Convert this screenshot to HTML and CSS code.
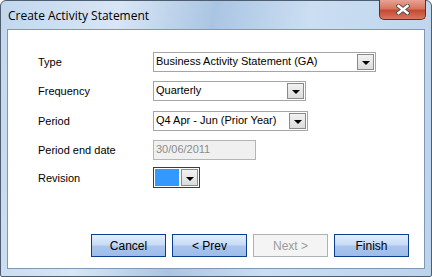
FILE: index.html
```html
<!DOCTYPE html>
<html lang="en">
<head>
  <meta charset="UTF-8">
  <title>Create Activity Statement</title>
  <link rel="stylesheet" href="styles.css">
</head>
<body>
  <div class="window">
    <div class="titlebar">
      <span class="title">Create Activity Statement</span>
      <div class="close">
        <svg width="14" height="11" viewBox="0 0 14 11">
          <path d="M2.5 2 L11.5 9 M11.5 2 L2.5 9" stroke="#505050" stroke-width="4.2" stroke-linecap="square"/>
          <path d="M2.5 2 L11.5 9 M11.5 2 L2.5 9" stroke="#fff" stroke-width="2.4" stroke-linecap="square"/>
        </svg>
      </div>
    </div>
    <div class="client">
      <div class="form">
        <div class="row r-type">
          <label>Type</label>
          <div class="combo w-type">
            <span class="value">Business Activity Statement (GA)</span>
            <span class="drop"><i></i></span>
          </div>
        </div>
        <div class="row r-freq">
          <label>Frequency</label>
          <div class="combo w-freq">
            <span class="value">Quarterly</span>
            <span class="drop"><i></i></span>
          </div>
        </div>
        <div class="row r-period">
          <label>Period</label>
          <div class="combo w-period">
            <span class="value">Q4 Apr - Jun (Prior Year)</span>
            <span class="drop"><i></i></span>
          </div>
        </div>
        <div class="row r-end">
          <label>Period end date</label>
          <div class="textbox disabled">30/06/2011</div>
        </div>
        <div class="row r-rev">
          <label>Revision</label>
          <div class="combo w-rev focused">
            <span class="value swatch"></span>
            <span class="drop"><i></i></span>
          </div>
        </div>
      </div>
      <div class="buttons">
        <button>Cancel</button>
        <button>&lt; Prev</button>
        <button class="disabled">Next &gt;</button>
        <button>Finish</button>
      </div>
    </div>
  </div>
</body>
</html>
```

FILE: styles.css
```css
html, body {
  margin: 0;
  padding: 0;
  width: 432px;
  height: 277px;
  overflow: hidden;
  background: #ffffff;
}

.window {
  box-sizing: border-box;
  width: 432px;
  height: 277px;
  border: 1px solid #4e5d70;
  border-radius: 6px 6px 2px 2px;
  background: linear-gradient(100deg, #c2d7ee 0%, #d8e6f5 25%, #aac5e3 45%, #cbdef2 65%, #bcd3ec 100%);
  display: flex;
  flex-direction: column;
  padding: 0 6px 7px 6px;
  font-family: "Liberation Sans", Arial, sans-serif;
}

.titlebar {
  height: 28px;
  display: flex;
  align-items: flex-start;
  justify-content: space-between;
}

.title {
  font-family: "Open Sans", "DejaVu Sans", sans-serif;
  font-size: 12px;
  color: #000;
  margin: 6px 0 0 1px;
}

.close {
  box-sizing: border-box;
  width: 47px;
  height: 20px;
  margin-top: -1px;
  margin-right: -1px;
  border: 1px solid #6b2b22;
  border-top: none;
  border-radius: 0 0 5px 5px;
  background: linear-gradient(#e8a394 0%, #d7765f 45%, #c44a32 55%, #d8785f 100%);
  display: flex;
  align-items: center;
  justify-content: center;
}

.client {
  flex: 1;
  box-sizing: border-box;
  background: #ffffff;
  border: 1px solid #8297b3;
  display: flex;
  flex-direction: column;
}

.form {
  flex: 1;
  padding-left: 30px;
}

.row {
  display: flex;
  align-items: center;
  height: 20px;
  font-size: 11px;
}

.r-type { margin-top: 22px; }
.r-freq { margin-top: 9px; }
.r-period { margin-top: 10px; }
.r-end { margin-top: 9px; }
.r-rev { margin-top: 7px; height: 21px; }

.row label {
  width: 115px;
  color: #000;
}

.combo {
  box-sizing: border-box;
  height: 20px;
  border: 1px solid #a5a5a5;
  display: flex;
  align-items: stretch;
  background: #fff;
}

.w-type { width: 223px; }
.w-freq { width: 153px; }
.w-period { width: 155px; }
.w-rev { width: 47px; height: 21px; }

.value {
  flex: 1;
  padding: 2px 0 0 2px;
  color: #000;
  white-space: nowrap;
  overflow: hidden;
}

.drop {
  box-sizing: border-box;
  width: 17px;
  margin: 1px;
  border: 1px solid #8a8a8a;
  background: linear-gradient(#f2f2f2, #dcdcdc);
  display: flex;
  align-items: center;
  justify-content: center;
}

.drop i {
  width: 0;
  height: 0;
  border-left: 4px solid transparent;
  border-right: 4px solid transparent;
  border-top: 4px solid #000;
  margin-top: 2px;
}

.focused {
  border-color: #3c3c3c;
}

.swatch {
  background: #3399ff;
  margin: 1px;
  padding: 0;
}

.textbox {
  box-sizing: border-box;
  width: 103px;
  height: 20px;
  border: 1px solid #b5b5b5;
  padding: 2px 0 0 2px;
}

.textbox.disabled {
  background: #f0f0f0;
  color: #8c8c8c;
}

.buttons {
  display: flex;
  justify-content: flex-end;
  gap: 6px;
  padding: 0 15px 11px 0;
}

.buttons button {
  box-sizing: border-box;
  width: 75px;
  height: 23px;
  border: 1px solid #0b3d91;
  border-radius: 0;
  background: linear-gradient(#e4eefb 0%, #c8dbf5 45%, #a9c5ee 55%, #9dbce9 100%);
  font-family: "Liberation Sans", Arial, sans-serif;
  font-size: 12px;
  color: #000;
  padding: 0;
}

.buttons button.disabled {
  border-color: #adb2b5;
  background: #f4f4f4;
  color: #9a9a9a;
}
```
